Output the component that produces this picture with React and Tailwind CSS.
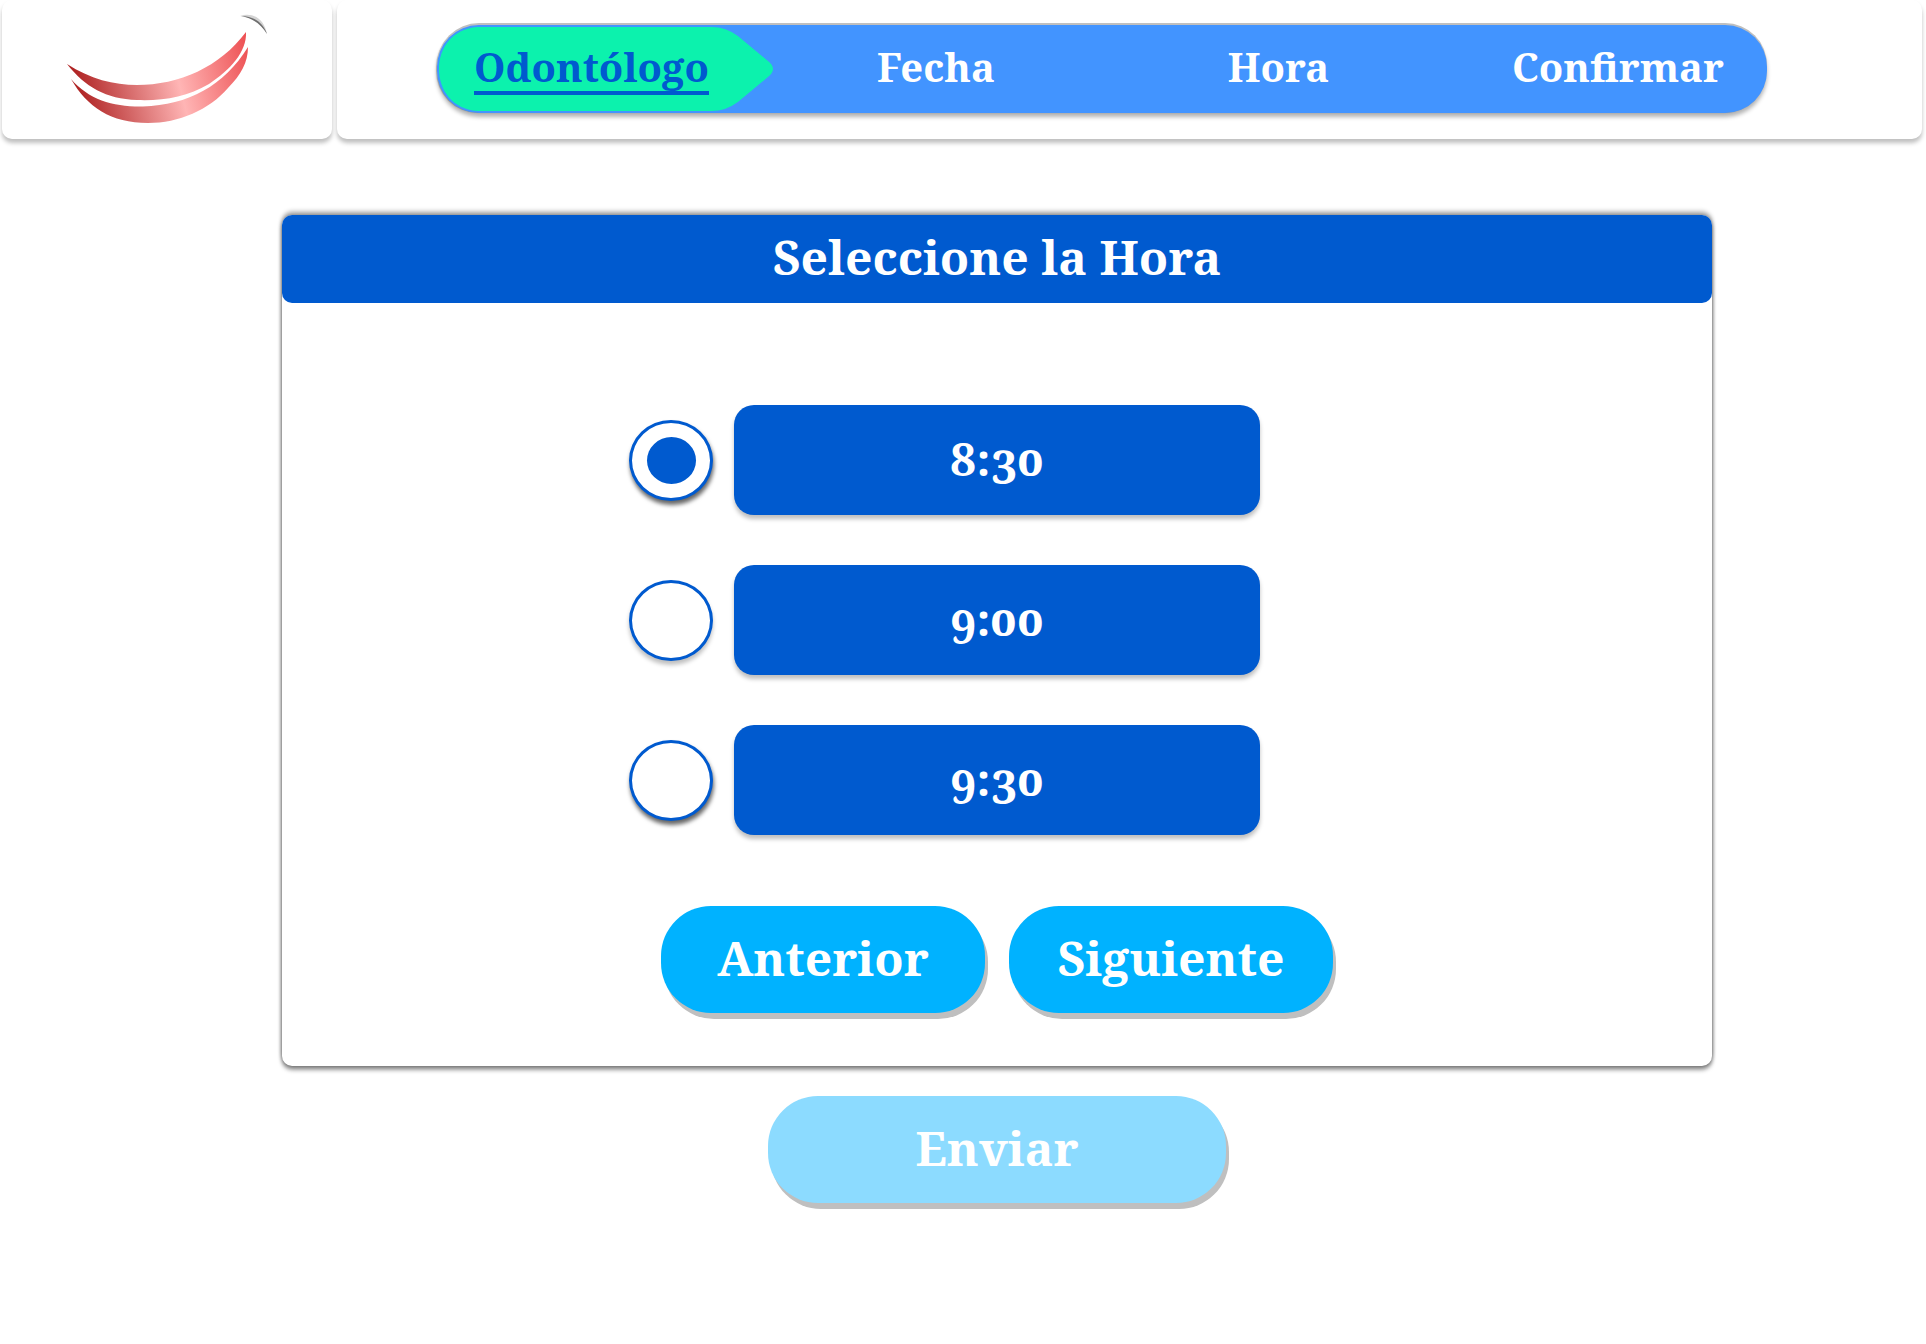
const steps = ["Odontólogo", "Fecha", "Hora", "Confirmar"];

const times = [
  { value: "8:30", shadow: "shadow-[1px_4px_4px_rgba(0,0,0,0.6)]" },
  { value: "9:00", shadow: "shadow-[0_4px_4px_rgba(0,0,0,0.25)]" },
  { value: "9:30", shadow: "shadow-[1px_4px_4px_rgba(0,0,0,0.6)]" },
];

function SmileLogo() {
  return (
    <svg viewBox="0 0 215 120" className="ml-[58px] h-[120px] w-[215px]" role="img" aria-label="Logo">
      <defs>
        <linearGradient id="lip" gradientUnits="userSpaceOnUse" x1="20" y1="84" x2="194" y2="40">
          <stop offset="0" stopColor="#b02525" />
          <stop offset="0.55" stopColor="#ffb5b5" />
          <stop offset="1" stopColor="#ec4a4d" />
        </linearGradient>
      </defs>
      <path d="M7 54 C30 69 54 75 77 75 C119 75 160 57 186 22 C187 42 170 60 149 74 C127 87 103 91 77 90 C46 89 25 77 7 54Z" fill="url(#lip)" />
      <path d="M11 69 C29 90 54 97 83 96.500 C128 95 164 76 188 37 C188 52 181 65 168 78 C149 100 119 113 88 113 C51 113 27 97 11 69Z" fill="url(#lip)" />
      <path d="M180 6 C192 2 204 8 207 24 C201 13 192 7 180 6Z" fill="#d4d4d4" />
      <path d="M181 6 C193 6 203 12 207 24 C201 14 192 8 181 6Z" fill="#6f6f6f" />
    </svg>
  );
}

function Stepper() {
  return (
    <nav
      aria-label="Pasos"
      className="h-[88px] rounded-[42px] bg-[#4294ff] shadow-[0_-2px_0_#bfbfbf,0_4px_4px_rgba(0,0,0,0.3),-1px_0_1px_rgba(0,0,0,0.25)]"
    >
      <ol className="grid h-full grid-cols-[335fr_328fr_357fr_310fr] text-[40px] font-bold leading-[48px] text-white">
        {steps.map((step, i) => (
          <li key={step} className="relative flex items-center justify-center last:pl-3">
            {i === 0 && (
              <svg viewBox="0 0 334 84" preserveAspectRatio="none" className="absolute inset-y-[2px] left-[2px] h-[84px] w-full" aria-hidden="true">
                <path d="M38 0 H272 Q286 0 298 9 L328 34 Q338 42 328 50 L298 75 Q286 84 272 84 H38 C14 82 0 64 0 42 C0 20 14 2 38 0Z" fill="#0cf2ad" />
              </svg>
            )}
            <a
              href="#"
              aria-current={i === 0 ? "step" : undefined}
              className={i === 0 ? "relative mr-[26px] border-b-4 border-[#005acf] text-[#005acf]" : "relative border-b-4 border-transparent"}
            >
              {step}
            </a>
          </li>
        ))}
      </ol>
    </nav>
  );
}

export default function App() {
  return (
    <div className="min-h-screen bg-white pb-10 font-['Noto_Serif',serif]">
      <header className="flex gap-[5px] pl-[2px] pr-[4px]">
        <div className="h-[139px] w-[330px] shrink-0 rounded-[10px] bg-white pt-[10px] shadow-[0_4px_4px_rgba(0,0,0,0.25)]">
          <SmileLogo />
        </div>
        <div className="h-[139px] grow rounded-[10px] bg-white pl-[100px] pr-[155px] pt-[25px] shadow-[0_4px_4px_rgba(0,0,0,0.25)]">
          <Stepper />
        </div>
      </header>

      <main className="mt-[76px] pl-[282px] pr-[214px]">
        <form onSubmit={(e) => e.preventDefault()}>
          <section className="rounded-[10px] bg-white pb-[53px] shadow-[0_-4px_4px_rgba(0,0,0,0.25),0_4px_4px_rgba(0,0,0,0.4),0_0_4px_rgba(0,0,0,0.4)]">
            <h1 className="flex h-[88px] items-center justify-center rounded-[10px] bg-[#005acf] pb-1 text-[48px] font-bold leading-none text-white">
              Seleccione la Hora
            </h1>

            <fieldset aria-label="Hora" className="grid gap-[50px] pt-[102px]">
              {times.map(({ value, shadow }, i) => (
                <label key={value} className="flex items-center justify-center gap-[21px] pr-[105px]">
                  <input
                    type="radio"
                    name="hora"
                    value={value}
                    defaultChecked={i === 0}
                    className={`grid h-[81px] w-[84px] shrink-0 appearance-none place-items-center rounded-[50%] border-3 border-[#005acf] bg-white before:h-[47px] before:w-[49px] before:rounded-[50%] checked:before:bg-[#005acf] ${shadow}`}
                  />
                  <span className="flex h-[110px] w-[526px] items-center justify-center rounded-[20px] bg-[#005acf] pb-1 text-[46px] font-bold oldstyle-nums leading-none text-white shadow-[0_4px_4px_rgba(0,0,0,0.25)]">
                    {value}
                  </span>
                </label>
              ))}
            </fieldset>

            <div className="mt-[71px] flex justify-center gap-[24px] text-[48px] font-bold leading-none text-white">
              <button type="button" className="h-[107px] w-[324px] rounded-[50px] bg-[#00b2ff] pb-1 shadow-[3px_6px_0_#bfbfbf]">
                Anterior
              </button>
              <button type="button" className="h-[107px] w-[324px] rounded-[50px] bg-[#00b2ff] pb-1 shadow-[3px_6px_0_#bfbfbf]">
                Siguiente
              </button>
            </div>
          </section>

          <div className="mt-[30px] flex justify-center">
            <button type="submit" className="h-[107px] w-[458px] rounded-[50px] bg-[#8cdbff] pb-1 text-[48px] font-bold leading-none text-white shadow-[3px_6px_0_#bfbfbf]">
              Enviar
            </button>
          </div>
        </form>
      </main>
    </div>
  );
}
